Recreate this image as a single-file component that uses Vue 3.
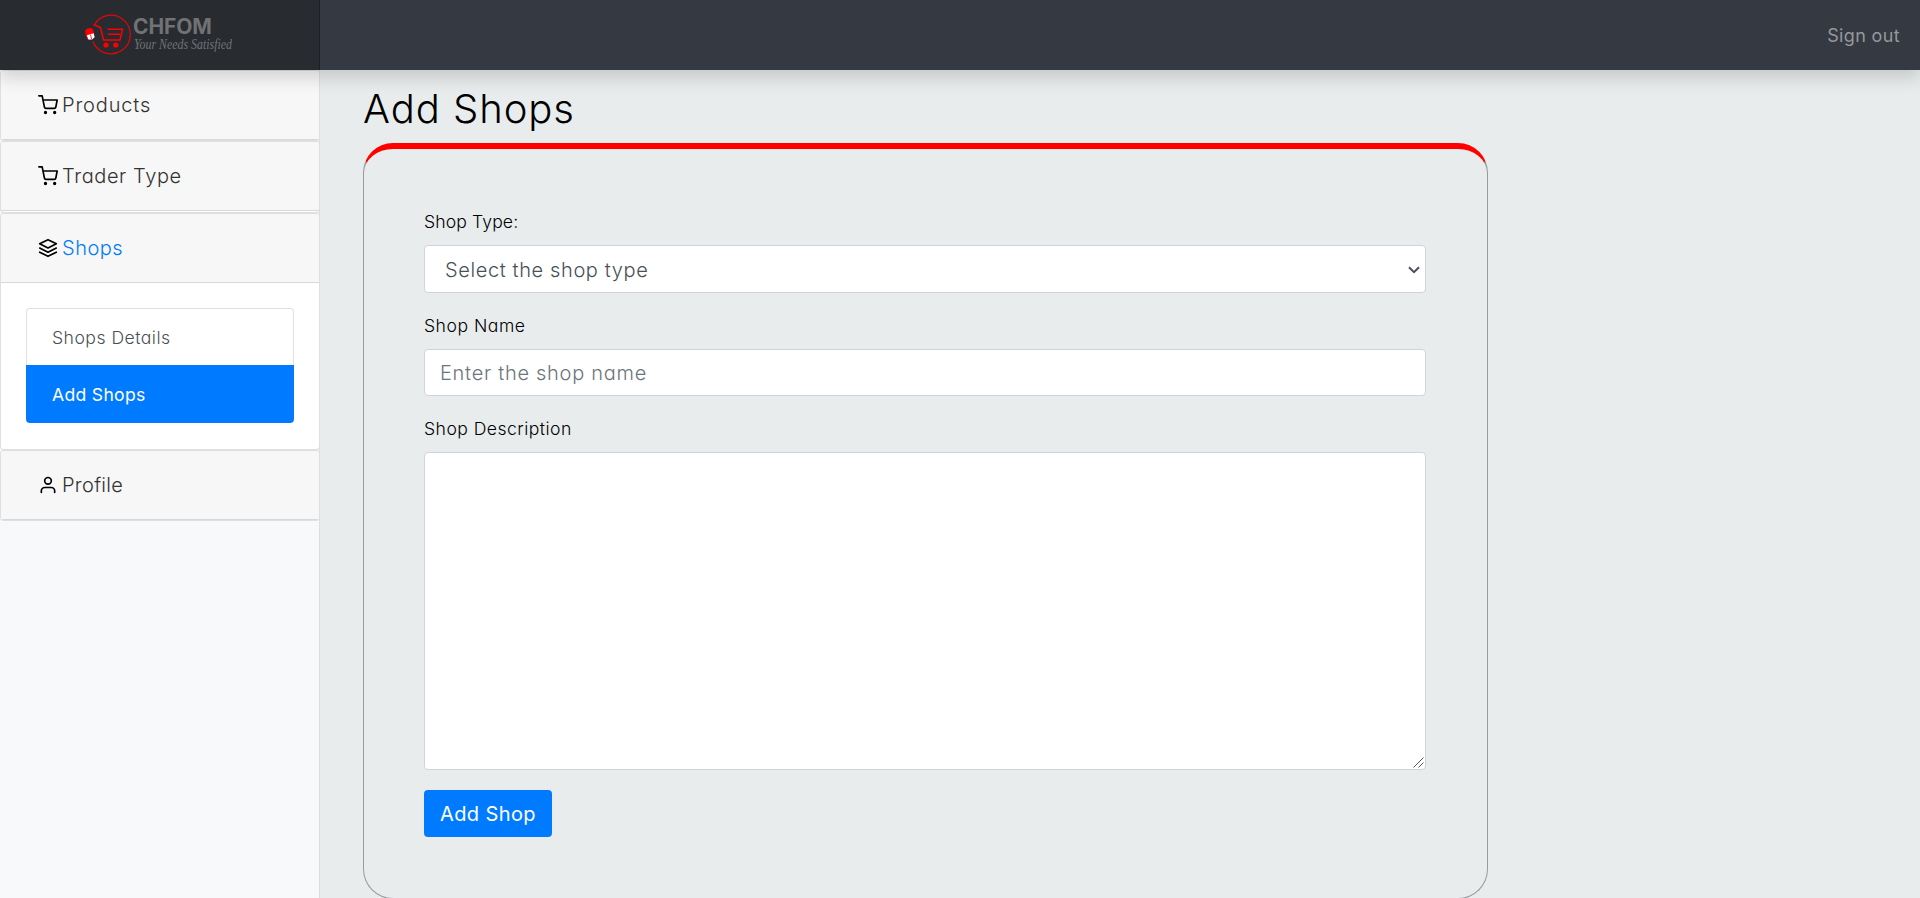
<script setup>
const items = [
  { name: 'Products', icon: 'cart' },
  { name: 'Trader Type', icon: 'cart' },
  { name: 'Shops', icon: 'layers', open: true },
  { name: 'Profile', icon: 'user' },
]
const slug = (s) => s.toLowerCase().replace(/ /g, '-')
</script>

<template>
  <div class="page">
    <header class="topbar">
      <a class="brand">
        <svg class="logo" width="48" height="44" viewBox="0 0 48 44" fill="none">
          <path d="M10.5 10.5A19.3 19.3 0 1 1 9 27.5" stroke="#e3060b" stroke-width="1.2" />
          <path d="M9.5 10.5L16.5 13.5L19.5 26H36L38.5 15.2H23.5M24 20.3H36" stroke="#f00" stroke-width="1.5" />
          <circle cx="22" cy="31" r="2.6" fill="#f00" />
          <circle cx="31.8" cy="31" r="2.6" fill="#f00" />
          <rect x="1.7" y="14.2" width="8.3" height="11.3" rx="3.5" transform="rotate(-12 5.8 20)" fill="#f00" />
          <path d="M2.8 21.3L9.6 19.3L10.6 23.2L8 25.6L4.4 25.4Z" fill="#fff" />
          <path d="M6.4 20.5L7.6 25" stroke="#d33" stroke-width="1" />
        </svg>
        <div class="brand-text">
          <span class="brand-name">CHFOM</span>
          <svg class="tagline" width="110" height="24" viewBox="0 0 110 24">
            <text x="2" y="14" textLength="98" lengthAdjust="spacingAndGlyphs">Your Needs Satisfied</text>
          </svg>
        </div>
      </a>
      <a class="signout">Sign out</a>
    </header>

    <div class="columns">
      <nav class="sidebar">
        <section v-for="item in items" :key="item.name" class="card" :class="slug(item.name)">
          <div class="card-header" :class="{ current: item.open }">
            <svg class="icon" width="20" height="20" viewBox="0 0 24 24" fill="none" stroke="#000" stroke-width="2" stroke-linecap="round" stroke-linejoin="round">
              <template v-if="item.icon === 'cart'">
                <circle cx="9" cy="21" r="1" />
                <circle cx="20" cy="21" r="1" />
                <path d="M1 1h4l2.68 13.39a2 2 0 0 0 2 1.61h9.72a2 2 0 0 0 2-1.61L23 6H6" />
              </template>
              <template v-else-if="item.icon === 'layers'">
                <path d="M12 2L2 7l10 5 10-5-10-5z" />
                <path d="M2 17l10 5 10-5M2 12l10 5 10-5" />
              </template>
              <template v-else>
                <path d="M20 21v-2a4 4 0 0 0-4-4H8a4 4 0 0 0-4 4v2" />
                <circle cx="12" cy="7" r="4" />
              </template>
            </svg>
            <span>{{ item.name }}</span>
          </div>
          <div v-if="item.open" class="card-body">
            <a class="link first">Shops Details</a>
            <a class="link active">Add Shops</a>
          </div>
        </section>
      </nav>

      <main class="content">
        <h1>Add Shops</h1>
        <form class="panel" @submit.prevent>
          <label class="l1">Shop Type:</label>
          <div class="control select">
            <span>Select the shop type</span>
            <svg width="12" height="8" viewBox="0 0 12 8" fill="none" stroke="#495057" stroke-width="2"><path d="M1 1.2l5 5 5-5" /></svg>
          </div>
          <label class="l2">Shop Name</label>
          <input class="control input" type="text" placeholder="Enter the shop name">
          <label class="l3">Shop Description</label>
          <div class="area-wrap">
            <textarea class="control area"></textarea>
            <svg class="grip" width="11" height="11" viewBox="0 0 11 11" stroke="#555" stroke-width="1"><path d="M.5 10.5l10-10M5.5 10.5l5-5" /></svg>
          </div>
          <button class="submit">Add Shop</button>
        </form>
      </main>
    </div>
  </div>
</template>

<style>
body { margin: 0; overflow: hidden; }
</style>

<style scoped>
* { box-sizing: border-box; }
.page {
  width: 1920px;
  height: 898px;
  overflow: hidden;
  display: flex;
  flex-direction: column;
  background: #e9eced;
  font-family: Inter, "Liberation Sans", sans-serif;
  font-weight: 300;
  font-feature-settings: "cv11";
  color: #000;
}
.topbar {
  position: relative;
  z-index: 2;
  flex: none;
  height: 70px;
  display: flex;
  justify-content: space-between;
  align-items: center;
  background: #353941;
  box-shadow: 0 8px 16px rgba(0, 0, 0, .15);
}
.brand {
  width: 320px;
  height: 70px;
  padding: 14px 0 0 84px;
  display: flex;
  background: #282b30;
  box-shadow: inset -1px 0 0 rgba(0, 0, 0, .25);
}
.logo { flex: none; }
.brand-text { display: flex; flex-direction: column; padding-left: 1px; }
.brand-name {
  height: 21px;
  font-size: 21px;
  line-height: 25px;
  font-weight: 700;
  letter-spacing: -.1px;
  color: #717273;
}
.tagline { display: block; overflow: visible; margin-left: -1px; }
.tagline text {
  font-family: "Liberation Serif", serif;
  font-size: 14.5px;
  font-style: italic;
  font-weight: 400;
  fill: #717375;
}
.signout {
  margin-right: 20px;
  font-size: 18px;
  font-weight: 400;
  color: #96989c;
  letter-spacing: .35px;
}
.columns { flex: 1; min-height: 0; display: flex; }
.sidebar {
  width: 320px;
  flex: none;
  background: #f8f9fa;
  box-shadow: inset -1px 0 0 #dcdee0;
}
.card {
  border: 1px solid rgba(0, 0, 0, .125);
  border-radius: 4px;
  background: #fff;
  overflow: hidden;
  height: 71px;
}
.card.trader-type { height: 72px; }
.card.shops { height: 237px; }
.card-header {
  height: 69px;
  padding-left: 37px;
  display: flex;
  align-items: center;
  gap: 4px;
  font-size: 20px;
  color: #333;
  background: #f7f7f7;
  border-bottom: 1px solid rgba(0, 0, 0, .125);
}
.products .card-header { letter-spacing: .85px; }
.trader-type .card-header { letter-spacing: .6px; }
.shops .card-header { letter-spacing: .5px; }
.profile .card-header { letter-spacing: .3px; }
.card-header.current { color: #007bff; }
.icon { flex: none; }
.card-body { padding: 25px; }
.link {
  height: 58px;
  padding-left: 26px;
  display: flex;
  align-items: center;
  font-size: 17.6px;
  letter-spacing: .3px;
  color: #495057;
}
.first {
  height: 57px;
  border: 1px solid #dfdfdf;
  border-bottom: 0;
  padding-left: 25px;
  letter-spacing: .48px;
  border-radius: 4px 4px 0 0;
}
.active {
  color: #fff;
  background: #007bff;
  font-weight: 400;
  border-radius: 0 0 4px 4px;
}
.content { flex: 1; padding-left: 43px; }
h1 {
  height: 73px;
  margin: 0;
  font-size: 40px;
  font-weight: 300;
  line-height: 78px;
  letter-spacing: .95px;
}
.panel {
  width: 1125px;
  height: 756px;
  padding: 59px 61px 0 60px;
  border: 1px solid #989b9e;
  border-top: 6px solid #f00;
  border-radius: 30px;
  display: flex;
  flex-direction: column;
  align-items: flex-start;
}
label {
  font-size: 17.6px;
  line-height: 27px;
  margin-bottom: 10px;
}
.l1 { letter-spacing: .12px; }
.l2 { letter-spacing: .5px; }
.l3 { letter-spacing: .45px; }
.control {
  width: 1002px;
  height: 47px;
  margin: 0 0 19px;
  flex: none;
  border: 1px solid #ced4da;
  border-radius: 4px;
  background: #fff;
  font: inherit;
  font-size: 20px;
  color: #495057;
}
.select {
  height: 48px;
  padding: 2px 5px 0 20px;
  display: flex;
  align-items: center;
  justify-content: space-between;
  letter-spacing: .62px;
}
.input { padding: 0 15px; letter-spacing: .72px; }
.input::placeholder { color: #6c757d; }
.area-wrap { position: relative; height: 318px; margin-bottom: 20px; }
.area { display: block; height: 318px; margin: 0; resize: none; }
.grip { position: absolute; right: 2px; bottom: 2px; }
.submit {
  width: 128px;
  height: 47px;
  padding: 0;
  border: 0;
  border-radius: 4px;
  background: #007bff;
  color: #fff;
  font: inherit;
  font-size: 20px;
  font-weight: 400;
  letter-spacing: .4px;
}
</style>
